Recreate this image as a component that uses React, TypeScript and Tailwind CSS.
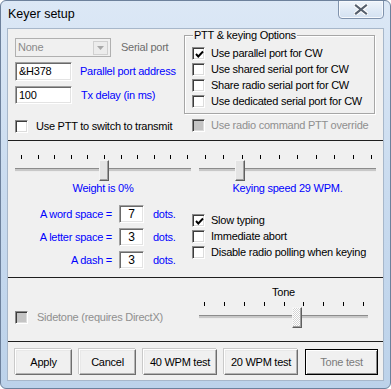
import React from 'react';

const font = "font-['Liberation_Sans',Arial,sans-serif]";

const CheckBox = ({ checked = false, disabled = false }: { checked?: boolean; disabled?: boolean }) => (
  <span
    className={`relative block w-[13px] h-[13px] shrink-0 border border-t-[#8a8a8a] border-l-[#8a8a8a] border-b-white border-r-white shadow-[inset_1px_1px_0_#3c3c3c,inset_-1px_-1px_0_#dcdcdc] ${
      disabled ? 'bg-[#c4c4c4]' : 'bg-white'
    }`}
  >
    {checked && (
      <svg className="absolute left-[2px] top-[2px]" width="9" height="9" viewBox="0 0 9 9">
        <polyline points="1,4 3.3,6.5 8,1.5" fill="none" stroke="#000" strokeWidth="1.9" />
      </svg>
    )}
  </span>
);

const CheckRow = ({ label, checked, disabled }: { label: string; checked?: boolean; disabled?: boolean }) => (
  <div className="flex items-center h-[13px]">
    <CheckBox checked={checked} disabled={disabled} />
    <span className={`ml-[6px] whitespace-nowrap ${disabled ? 'text-[#8f8f8f]' : 'text-black'}`}>{label}</span>
  </div>
);

const Field = ({ value, className }: { value: string; className: string }) => (
  <div
    className={`${className} flex items-center bg-white border border-t-[#a0a0a0] border-l-[#a0a0a0] border-b-white border-r-white shadow-[inset_1px_1px_0_#696969,inset_-1px_-1px_0_#e3e3e3] text-black`}
  >
    {value}
  </div>
);

const Slider = ({
  width,
  ticks,
  thumb,
  tickPad,
  focused = false,
}: {
  width: string;
  ticks: number;
  thumb: number;
  tickPad: string;
  focused?: boolean;
}) => (
  <div className={`relative ${width} h-[26px]`}>
    <div className={`flex justify-between ${tickPad}`}>
      {Array.from({ length: ticks }).map((_, i) => (
        <span key={i} className="block w-[1px] h-[4px] bg-black" />
      ))}
    </div>
    <div className="absolute left-0 right-0 top-[13px] h-[4px] bg-[#c8c8c8] border-t border-t-[#8c8c8c] border-b border-b-[#ececec]" />
    <div
      className={`absolute top-[5px] w-[10px] h-[21px] border border-t-[#f4f4f4] border-l-[#f4f4f4] border-b-[#5f5f5f] border-r-[#5f5f5f] shadow-[inset_-1px_-1px_0_#a0a0a0] ${
        focused
          ? 'bg-[repeating-conic-gradient(#d4d4d4_0_25%,#ffffff_0_50%)] bg-size-[2px_2px]'
          : 'bg-[#e4e4e4]'
      }`}
      style={{ left: thumb }}
    />
  </div>
);

const Btn = ({ label, width, isDefault = false }: { label: string; width: string; isDefault?: boolean }) => (
  <div
    className={`${width} h-[26px] flex items-center justify-center bg-[#f0f0f0] ${
      isDefault
        ? 'border border-black shadow-[inset_1px_1px_0_#fff,inset_-1px_-1px_0_#8a8a8a] text-[#7b7b7b]'
        : 'border border-t-white border-l-white border-b-[#6e6e6e] border-r-[#6e6e6e] shadow-[inset_-1px_-1px_0_#b4b4b4,inset_1px_1px_0_#e8e8e8,-1px_-1px_0_#c9c9c9] text-black'
    }`}
  >
    {label}
  </div>
);

const ptOptions = [
  { label: 'Use parallel port for CW', checked: true },
  { label: 'Use shared serial port for CW', checked: false },
  { label: 'Share radio serial port for CW', checked: false },
  { label: 'Use dedicated serial port for CW', checked: false },
];

const spacing = [
  { label: 'A word space =', value: '7' },
  { label: 'A letter space =', value: '3' },
  { label: 'A dash =', value: '3' },
];

export default function App() {
  return (
    <div
      className={`${font} w-[391px] h-[389px] flex flex-col rounded-[6px] border border-[#6d819c] bg-gradient-to-b from-[#dce8f6] via-[#c9dbef] to-[#bcd2ea] text-[11px] tracking-[-0.25px] leading-[13px] overflow-hidden`}
    >
      {/* Title bar */}
      <div className="h-[27px] flex justify-between items-start pl-[7px] pr-[6px]">
        <span className="mt-[7px] text-[12.5px] tracking-normal text-black">Keyer setup</span>
        <div className="-mt-[1px] w-[46px] h-[19px] flex items-center justify-center rounded-b-[4px] border border-[#8093ad] bg-gradient-to-b from-[#eef4fb] to-[#d3e1f1] shadow-[inset_0_0_0_1px_#f6f9fd]">
          <svg width="14" height="11" viewBox="0 0 14 11">
            <path d="M2 1.5 L12 9.5 M12 1.5 L2 9.5" stroke="#ffffff" strokeWidth="4.2" strokeLinecap="square" />
            <path d="M2 1.5 L12 9.5 M12 1.5 L2 9.5" stroke="#56606e" strokeWidth="2.2" strokeLinecap="square" />
          </svg>
        </div>
      </div>

      {/* Client area */}
      <div className="mx-[6px] h-[353px] flex flex-col bg-[#f0f0f0] border border-[#a7b7ca]">
        {/* Ports section */}
        <div className="h-[112px] flex border-b border-[#1e1e1e] shrink-0">
          <div className="w-[176px] pl-[7px] pt-[9px] flex flex-col">
            <div className="flex items-center">
              <div className="w-[96px] h-[19px] flex items-center justify-between pl-[2px] pr-[2px] border border-[#b0b0b0] bg-[#f0f0f0] text-[#8a8a8a]">
                <span>None</span>
                <div className="w-[15px] h-[14px] flex items-center justify-center border border-[#d0d0d0] bg-[#ececec]">
                  <svg width="7" height="4" viewBox="0 0 7 4">
                    <path d="M0 0 H7 L3.5 4 Z" fill="#a8a8a8" />
                  </svg>
                </div>
              </div>
              <span className="ml-[10px] text-[#6d6d6d]">Serial port</span>
            </div>
            <div className="mt-[5px] flex items-center">
              <Field value="&H378" className="w-[57px] h-[19px] pl-[3px]" />
              <span className="ml-[8px] text-[#0000ff] whitespace-nowrap">Parallel port address</span>
            </div>
            <div className="mt-[5px] flex items-center">
              <Field value="100" className="w-[57px] h-[18px] pl-[3px]" />
              <span className="ml-[9px] text-[#0000ff] whitespace-nowrap">Tx delay (in ms)</span>
            </div>
            <div className="mt-[16px] ml-[0px]">
              <div className="flex items-center h-[13px]">
                <CheckBox />
                <span className="ml-[8px] whitespace-nowrap">Use PTT to switch to transmit</span>
              </div>
            </div>
          </div>

          <div className="pt-[6px] flex flex-col">
            <div className="relative w-[191px] h-[79px] border border-[#a6a6a6] shadow-[inset_1px_1px_0_#ffffff,1px_1px_0_#ffffff] pt-[11px] pl-[7px] flex flex-col gap-[3px]">
              <span className="absolute -top-[7px] left-[8px] px-[1px] bg-[#f0f0f0] whitespace-nowrap">
                PTT &amp; keying Options
              </span>
              {ptOptions.map((o) => (
                <CheckRow key={o.label} label={o.label} checked={o.checked} />
              ))}
            </div>
            <div className="mt-[5px] ml-[8px]">
              <CheckRow label="Use radio command PTT override" disabled />
            </div>
          </div>
        </div>

        {/* Keying section */}
        <div className="h-[137px] flex flex-col border-b border-[#1e1e1e] shrink-0">
          <div className="flex pl-[7px] pt-[14px]">
            <div className="w-[176px] flex flex-col items-center">
              <Slider width="w-[176px]" ticks={11} thumb={84} tickPad="pl-[6px] pr-[3px]" />
              <span className="mt-[1px] text-[#0000ff]">Weight is 0%</span>
            </div>
            <div className="ml-[8px] w-[177px] flex flex-col items-center">
              <Slider width="w-[177px]" ticks={10} thumb={36} tickPad="pl-[6px] pr-[4px]" />
              <span className="mt-[1px] text-[#0000ff]">Keying speed 29 WPM.</span>
            </div>
          </div>
          <div className="flex mt-[10px]">
            <div className="w-[176px] grid grid-cols-[104px_25px_auto] gap-x-[7px] gap-y-[5px] items-center">
              {spacing.map((s) => (
                <React.Fragment key={s.label}>
                  <span className="text-right text-[#0000ff] whitespace-nowrap">{s.label}</span>
                  <Field value={s.value} className="w-[25px] h-[18px] justify-center text-[12px]" />
                  <span className="ml-[2px] text-[#0000ff]">dots.</span>
                </React.Fragment>
              ))}
            </div>
            <div className="ml-[8px] mt-[9px] flex flex-col gap-[3px]">
              <CheckRow label="Slow typing" checked />
              <CheckRow label="Immediate abort" />
              <CheckRow label="Disable radio polling when keying" />
            </div>
          </div>
        </div>

        {/* Sidetone section */}
        <div className="h-[64px] flex border-b border-[#1e1e1e] shrink-0">
          <div className="w-[191px] pl-[7px] pt-[33px]">
            <div className="flex items-center h-[13px]">
              <CheckBox disabled />
              <span className="ml-[9px] text-[#8f8f8f] whitespace-nowrap">Sidetone (requires DirectX)</span>
            </div>
          </div>
          <div className="w-[169px] pt-[8px] flex flex-col items-center">
            <span className="mb-[3px]">Tone</span>
            <Slider width="w-[169px]" ticks={9} thumb={93} tickPad="pl-[5px] pr-[4px]" focused />
          </div>
        </div>

        {/* Buttons */}
        <div className="flex pl-[7px] pt-[7px] gap-[7px]">
          <Btn label="Apply" width="w-[57px]" />
          <Btn label="Cancel" width="w-[57px]" />
          <Btn label="40 WPM test" width="w-[74px]" />
          <Btn label="20 WPM test" width="w-[74px]" />
          <Btn label="Tone test" width="w-[73px]" isDefault />
        </div>
      </div>
    </div>
  );
}
